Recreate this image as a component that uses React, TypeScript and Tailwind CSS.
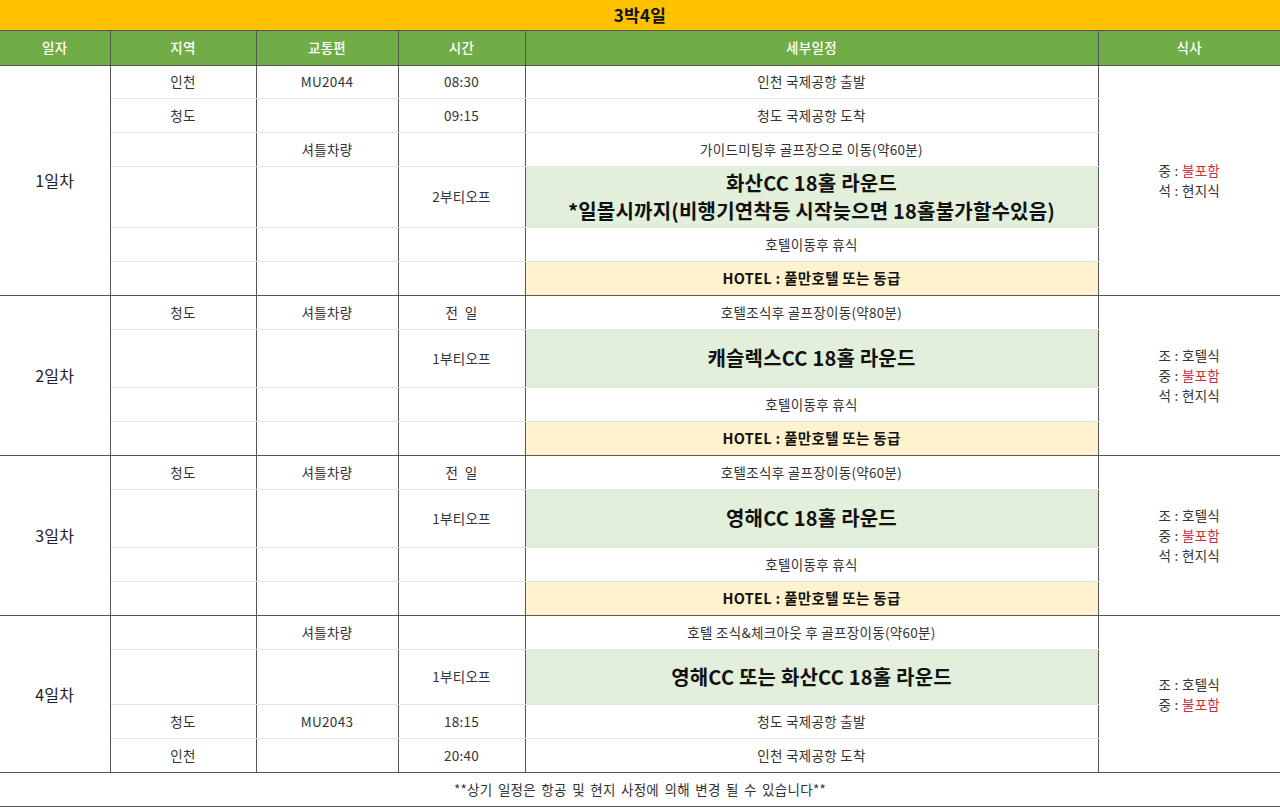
import React from "react";

type Row = {
  region?: string;
  flight?: string;
  time?: string;
  detail: string;
  kind?: "normal" | "golf" | "hotel";
  h: number;
};

type Day = {
  label: string;
  rows: Row[];
  meals: { k: string; v: string; red?: boolean }[];
};

const HOTEL = "HOTEL : 풀만호텔 또는 동급";

const days: Day[] = [
  {
    label: "1일차",
    rows: [
      { region: "인천", flight: "MU2044", time: "08:30", detail: "인천 국제공항 출발", h: 33 },
      { region: "청도", time: "09:15", detail: "청도 국제공항 도착", h: 34 },
      { flight: "셔틀차량", detail: "가이드미팅후 골프장으로 이동(약60분)", h: 34 },
      {
        time: "2부티오프",
        detail: "화산CC 18홀 라운드\n*일몰시까지(비행기연착등 시작늦으면 18홀불가할수있음)",
        kind: "golf",
        h: 61,
      },
      { detail: "호텔이동후 휴식", h: 34 },
      { detail: HOTEL, kind: "hotel", h: 34 },
    ],
    meals: [
      { k: "중", v: "불포함", red: true },
      { k: "석", v: "현지식" },
    ],
  },
  {
    label: "2일차",
    rows: [
      { region: "청도", flight: "셔틀차량", time: "전  일", detail: "호텔조식후 골프장이동(약80분)", h: 34 },
      { time: "1부티오프", detail: "캐슬렉스CC 18홀 라운드", kind: "golf", h: 58 },
      { detail: "호텔이동후 휴식", h: 34 },
      { detail: HOTEL, kind: "hotel", h: 34 },
    ],
    meals: [
      { k: "조", v: "호텔식" },
      { k: "중", v: "불포함", red: true },
      { k: "석", v: "현지식" },
    ],
  },
  {
    label: "3일차",
    rows: [
      { region: "청도", flight: "셔틀차량", time: "전  일", detail: "호텔조식후 골프장이동(약60분)", h: 34 },
      { time: "1부티오프", detail: "영해CC 18홀 라운드", kind: "golf", h: 58 },
      { detail: "호텔이동후 휴식", h: 34 },
      { detail: HOTEL, kind: "hotel", h: 34 },
    ],
    meals: [
      { k: "조", v: "호텔식" },
      { k: "중", v: "불포함", red: true },
      { k: "석", v: "현지식" },
    ],
  },
  {
    label: "4일차",
    rows: [
      { flight: "셔틀차량", detail: "호텔 조식&체크아웃 후 골프장이동(약60분)", h: 34 },
      { time: "1부티오프", detail: "영해CC 또는 화산CC 18홀 라운드", kind: "golf", h: 55 },
      { region: "청도", flight: "MU2043", time: "18:15", detail: "청도 국제공항 출발", h: 34 },
      { region: "인천", time: "20:40", detail: "인천 국제공항 도착", h: 34 },
    ],
    meals: [
      { k: "조", v: "호텔식" },
      { k: "중", v: "불포함", red: true },
    ],
  },
];

const headers = ["일자", "지역", "교통편", "시간", "세부일정", "식사"];

export default function App() {
  return (
    <div
      className="w-[1280px] h-[807px] bg-white overflow-hidden text-[#333]"
      style={{ fontFamily: '"Noto Sans CJK KR", "Noto Sans", sans-serif' }}
    >
      <table className="w-[1280px] table-fixed border-collapse text-[13.5px] tracking-[0.3px]">
        <colgroup>
          <col className="w-[110px]" />
          <col className="w-[146px]" />
          <col className="w-[142px]" />
          <col className="w-[127px]" />
          <col className="w-[573px]" />
          <col className="w-[182px]" />
        </colgroup>
        <tbody>
          <tr className="h-[30px] bg-[#ffc000]">
            <td colSpan={6} className="text-center text-[17px] font-bold text-[#111] border-b border-[#555]">
              3박4일
            </td>
          </tr>
          <tr className="h-[35px] bg-[#70ad47]">
            {headers.map((h, i) => (
              <td
                key={h}
                className={`text-center text-white font-medium border-b border-[#555] ${i < 5 ? "border-r" : ""}`}
              >
                {h}
              </td>
            ))}
          </tr>
          {days.map((day) =>
            day.rows.map((r, ri) => {
              const last = ri === day.rows.length - 1;
              const rowBorder = last ? "border-b border-b-[#555]" : "border-b border-b-[#e3e3e3]";
              const bg =
                r.kind === "golf" ? "bg-[#e2efda]" : r.kind === "hotel" ? "bg-[#fff2cc]" : "bg-white";
              return (
                <tr key={day.label + ri} style={{ height: r.h }}>
                  {ri === 0 && (
                    <td
                      rowSpan={day.rows.length}
                      className="text-center text-[16px] text-[#222] border-r border-r-[#555] border-b border-b-[#555]"
                    >
                      {day.label}
                    </td>
                  )}
                  <td className={`text-center border-r border-r-[#555] ${rowBorder}`}>{r.region}</td>
                  <td className={`text-center border-r border-r-[#555] ${rowBorder}`}>{r.flight}</td>
                  <td className={`text-center border-r border-r-[#555] whitespace-pre ${rowBorder}`}>
                    {r.time}
                  </td>
                  <td
                    className={`text-center border-r border-r-[#555] ${bg} ${rowBorder} ${
                      r.kind === "golf"
                        ? "text-[20px] font-bold text-[#111] leading-[28px] tracking-[0.2px] whitespace-pre-line"
                        : r.kind === "hotel"
                        ? "text-[14.5px] font-bold text-[#111]"
                        : ""
                    }`}
                  >
                    {r.detail}
                  </td>
                  {ri === 0 && (
                    <td rowSpan={day.rows.length} className="text-center border-b border-b-[#555] leading-[20px]">
                      {day.meals.map((m) => (
                        <div key={m.k}>
                          {m.k} : <span className={m.red ? "text-[#c8323c]" : ""}>{m.v}</span>
                        </div>
                      ))}
                    </td>
                  )}
                </tr>
              );
            })
          )}
          <tr className="h-[34px]">
            <td colSpan={6} className="text-center border-b border-[#555] [word-spacing:2px]">
              **상기 일정은 항공 및 현지 사정에 의해 변경 될 수 있습니다**
            </td>
          </tr>
        </tbody>
      </table>
    </div>
  );
}
